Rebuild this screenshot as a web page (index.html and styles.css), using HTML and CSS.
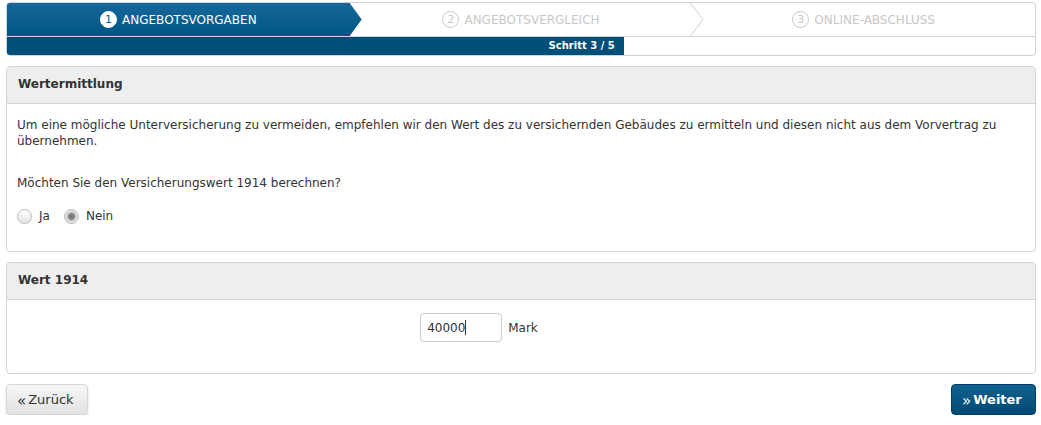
FILE: index.html
```html
<!DOCTYPE html>
<html lang="de">
<head>
    <meta charset="UTF-8">
    <meta name="viewport" content="width=device-width, initial-scale=1.0">
    <title>Wertermittlung</title>
    <link rel="stylesheet" href="styles.css">
</head>
<body>

<!-- Step navigation -->
<div class="progress-box">
    <div class="steps">
        <div class="step active">
            <span class="step-num">1</span> ANGEBOTSVORGABEN
            <span class="step-point"></span>
        </div>
        <div class="step">
            <span class="step-num">2</span> ANGEBOTSVERGLEICH
            <svg class="step-chevron" width="14" height="33" viewBox="0 0 14 33">
                <polyline points="0.5,0 13,16.5 0.5,33" fill="none" stroke="#d0d0d0" stroke-width="1"/>
            </svg>
        </div>
        <div class="step">
            <span class="step-num">3</span> ONLINE-ABSCHLUSS
        </div>
    </div>
    <div class="progress-track">
        <div class="progress-fill" style="width: 60%">Schritt 3 / 5</div>
    </div>
</div>

<!-- Wertermittlung -->
<div class="panel">
    <div class="panel-head">Wertermittlung</div>
    <div class="panel-body">
        <p class="intro">Um eine mögliche Unterversicherung zu vermeiden, empfehlen wir den Wert des zu versichernden Gebäudes zu ermitteln und diesen nicht aus dem Vorvertrag zu übernehmen.</p>
        <p class="question">Möchten Sie den Versicherungswert 1914 berechnen?</p>
        <div class="radio-row">
            <label class="radio"><span class="radio-dot"></span>Ja</label>
            <label class="radio"><span class="radio-dot checked"></span>Nein</label>
        </div>
    </div>
</div>

<!-- Wert 1914 -->
<div class="panel">
    <div class="panel-head">Wert 1914</div>
    <div class="panel-body value-body">
        <div class="value-field">
            <span class="value-input">40000<span class="caret"></span></span>
            <span class="unit">Mark</span>
        </div>
    </div>
</div>

<div class="actions">
    <button class="btn btn-back" type="button"><span class="chev">&laquo;</span>Zurück</button>
    <button class="btn btn-next" type="button"><span class="chev">&raquo;</span>Weiter</button>
</div>

</body>
</html>
```

FILE: styles.css
```css
body {
    font-family: "DejaVu Sans", Verdana, sans-serif;
    font-size: 12px;
    color: #333;
    margin: 0;
    padding: 2px 5px 0 6px;
    background-color: #fff;
}

/* step navigation */
.progress-box {
    border: 1px solid #d2d2d2;
    border-radius: 4px;
    overflow: hidden;
}

.steps {
    display: flex;
    height: 33px;
    border-bottom: 1px solid #d2d2d2;
}

.step {
    position: relative;
    flex: 1;
    display: flex;
    align-items: center;
    justify-content: center;
    gap: 4px;
    color: #c8c8c8;
    font-size: 12px;
}

.step.active {
    background: linear-gradient(#16689a, #005684);
    color: #fff;
    z-index: 2;
}

.step-num {
    display: inline-flex;
    align-items: center;
    justify-content: center;
    width: 15px;
    height: 15px;
    border: 1px solid #c8c8c8;
    border-radius: 50%;
    font-size: 11px;
    margin-right: 1px;
}

.step.active .step-num {
    background-color: #fff;
    border-color: #fff;
    color: #0a5c8a;
}

.step-point {
    position: absolute;
    top: 0;
    right: -12px;
    width: 12px;
    height: 33px;
    background: linear-gradient(#16689a, #005684);
    clip-path: polygon(0 0, 100% 50%, 0 100%);
}

.step-chevron {
    position: absolute;
    top: 0;
    right: -12px;
    z-index: 1;
}

.progress-track {
    height: 18px;
}

.progress-fill {
    height: 100%;
    background-color: #004f79;
    color: #fff;
    font-size: 10px;
    font-weight: bold;
    text-align: right;
    line-height: 18px;
    padding-right: 9px;
    box-sizing: border-box;
}

/* panels */
.panel {
    margin-top: 10px;
    border: 1px solid #d4d4d4;
    border-radius: 4px;
    overflow: hidden;
}

.panel-head {
    height: 36px;
    line-height: 35px;
    padding-left: 11px;
    background-color: #eee;
    border-bottom: 1px solid #d4d4d4;
    font-weight: bold;
    font-size: 12px;
}

.panel-body {
    padding: 13px 10px 27px;
    line-height: 16px;
}

.panel-body p {
    margin: 0;
}

.intro {
    margin-bottom: 26px !important;
}

.question {
    margin-bottom: 17px !important;
}

.radio-row {
    display: flex;
    gap: 14px;
}

.radio {
    display: flex;
    align-items: center;
    gap: 7px;
}

.radio-dot {
    width: 15px;
    height: 15px;
    border: 1px solid #b8b8b8;
    border-radius: 50%;
    background: linear-gradient(#fff, #e4e4e4);
    box-sizing: border-box;
}

.radio-dot.checked {
    background: radial-gradient(circle, #6f6f6f 0, #8a8a8a 3px, #d4d4d4 4.5px, #f0f0f0 7px);
}

.value-body {
    padding: 13px 11px 31px;
    display: flex;
    justify-content: center;
}

.value-field {
    display: flex;
    align-items: center;
    gap: 6px;
    margin-right: 84px;
}

.value-input {
    display: flex;
    align-items: center;
    width: 82px;
    height: 29px;
    box-sizing: border-box;
    padding-left: 6px;
    border: 1px solid #ccc;
    border-radius: 4px;
    font-size: 12px;
}

.caret {
    display: inline-block;
    width: 1px;
    height: 15px;
    background-color: #333;
}

/* buttons */
.actions {
    display: flex;
    justify-content: space-between;
    margin-top: 10px;
}

.btn {
    font-family: inherit;
    font-size: 13px;
    height: 31px;
    border-radius: 4px;
    cursor: pointer;
    display: flex;
    align-items: center;
    gap: 2px;
}

.btn-back {
    width: 82px;
    padding: 0 0 0 10px;
    background: linear-gradient(#f6f6f6, #e2e2e2);
    border: 1px solid #d6d6d6;
    color: #333;
    box-shadow: 0 1px 2px rgba(0, 0, 0, 0.2);
}

.btn-next {
    width: 85px;
    padding: 0 0 0 10px;
    background: linear-gradient(#11628f, #004a73);
    border: 1px solid #003f63;
    color: #fff;
    font-weight: bold;
}

.chev {
    font-size: 15px;
    line-height: 1;
    margin-top: 3px;
    font-weight: normal;
}
```
